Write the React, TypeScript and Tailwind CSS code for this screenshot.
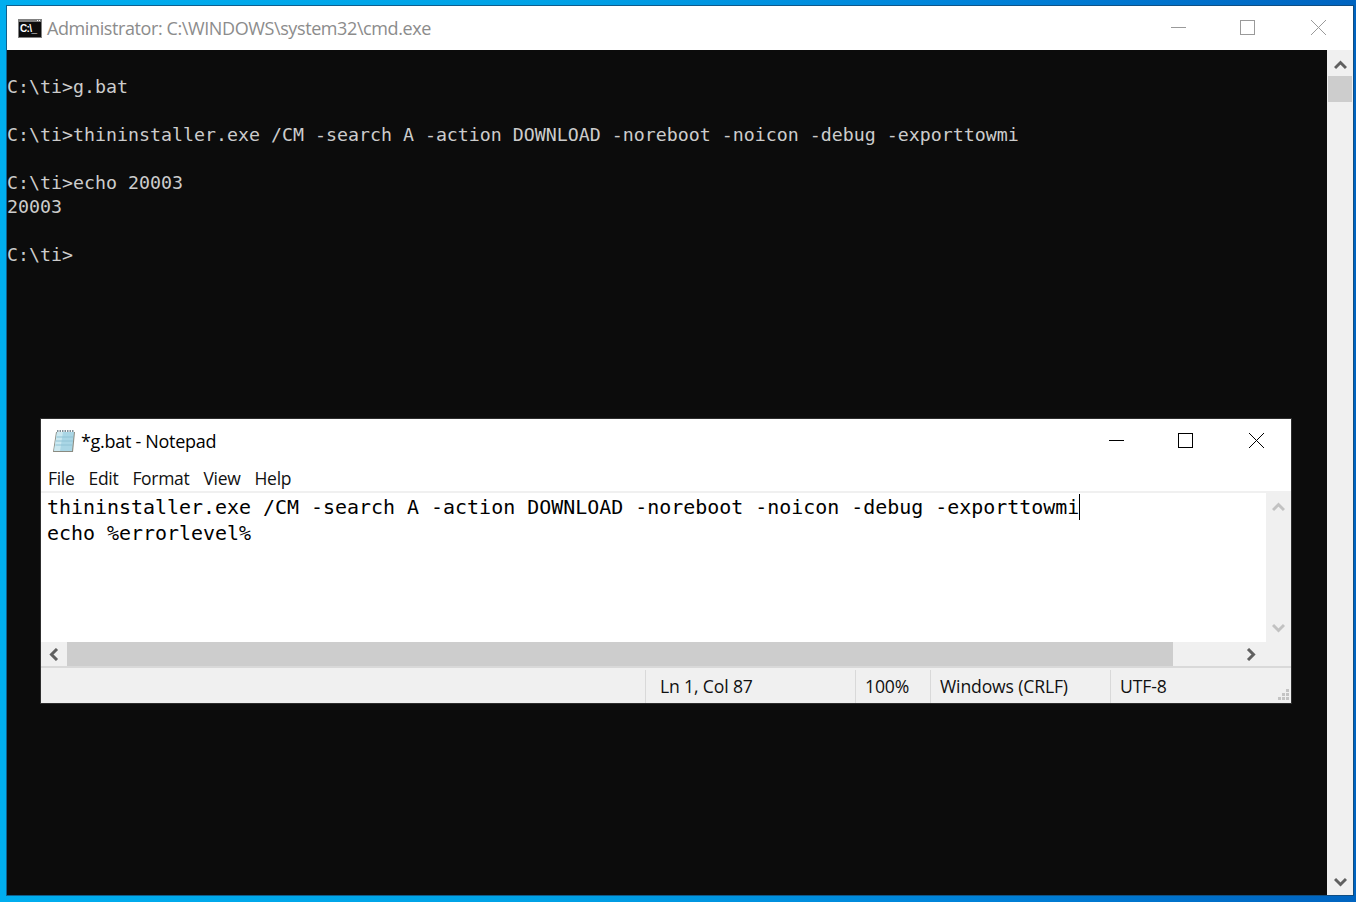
const mono = "font-['DejaVu_Sans_Mono','Liberation_Mono',monospace]";
const ui = "font-['Open_Sans','Noto_Sans',sans-serif]";

function Chevron({ dir, color, className }: { dir: "up" | "down" | "left" | "right"; color: string; className?: string }) {
  const d = {
    up: "M1 8 L6.5 2.5 L12 8",
    down: "M1 2 L6.5 7.5 L12 2",
    left: "M8 1 L2.5 6.5 L8 12",
    right: "M2 1 L7.5 6.5 L2 12",
  }[dir];
  const vertical = dir === "up" || dir === "down";
  return (
    <svg width={vertical ? 13 : 10} height={vertical ? 10 : 13} viewBox={vertical ? "0 0 13 10" : "0 0 10 13"} className={className}>
      <path d={d} fill="none" stroke={color} strokeWidth="3" />
    </svg>
  );
}

function WinButtons({ color }: { color: string }) {
  return (
    <div className="mb-px flex items-center">
      <svg width="15" height="15" viewBox="0 0 15 15"><path d="M0 7.5H15" stroke={color} strokeWidth="1" /></svg>
      <svg width="15" height="15" viewBox="0 0 15 15" className="ml-[54px]"><rect x="0.5" y="0.5" width="14" height="14" fill="none" stroke={color} strokeWidth="1" /></svg>
      <svg width="15" height="15" viewBox="0 0 15 15" className="ml-[56px]"><path d="M0 0L15 15M15 0L0 15" stroke={color} strokeWidth="1" /></svg>
    </div>
  );
}

function NotepadIcon() {
  return (
    <svg width="24" height="25" viewBox="0 0 24 25">
      <path d="M4 3 L23 3 L21 23 L1 23 Z" fill="#8a8a80" />
      <path d="M5 3 L22 3 L20 22 L2 22 Z" fill="#a9d6e5" />
      <path d="M5 3 L11 3 L8 22 L2 22 Z" fill="#cbe8f0" />
      <path d="M5 2 H22" stroke="#7f8f98" strokeWidth="2" strokeDasharray="1.5 1" />
      <path d="M4.5 8H21M4 12H21M3.5 16H20" stroke="#8fc2d4" strokeWidth="1" />
    </svg>
  );
}

export default function App() {
  return (
    <div className="relative h-[902px] w-[1356px] overflow-hidden bg-[linear-gradient(90deg,#00aeef_0%,#00a2e6_40%,#0084da_70%,#0064c0_100%)]">
      {/* Command prompt window */}
      <div className="absolute left-[7px] top-[6px] flex h-[889px] w-[1346px] flex-col shadow-[0_0_0_1px_rgba(20,70,110,0.75)]">
        <div className={`flex h-[44px] shrink-0 items-center justify-between bg-white pl-[11px] pr-[27px] ${ui}`}>
          <div className="flex items-center gap-[5px]">
            <div className="flex h-[19px] w-[24px] flex-col bg-[#808080] px-px pb-px">
              <div className="flex h-[3px] shrink-0 items-center justify-end gap-px pr-px">
                <span className="h-px w-px bg-white" />
                <span className="h-px w-px bg-white" />
              </div>
              <div className="flex flex-1 items-center overflow-hidden bg-[#0c0c0c] pl-px">
                <span className="font-['Liberation_Sans',sans-serif] text-[10px] font-bold leading-[14px] tracking-[-0.6px] text-white">C:\_</span>
              </div>
            </div>
            <span className="text-[18px] leading-[24px] tracking-[-0.4px] text-[#8c8c8c]">Administrator: C:\WINDOWS\system32\cmd.exe</span>
          </div>
          <WinButtons color="#9a9a9a" />
        </div>
        <div className="flex min-h-0 flex-1">
          <pre className={`min-w-0 flex-1 bg-[#0c0c0c] pt-[25px] text-[18.27px] leading-[24px] text-[#cccccc] ${mono}`}>{`C:\\ti>g.bat

C:\\ti>thininstaller.exe /CM -search A -action DOWNLOAD -noreboot -noicon -debug -exporttowmi

C:\\ti>echo 20003
20003

C:\\ti>`}</pre>
          <div className="flex w-[26px] shrink-0 flex-col bg-[#f0f0f0]">
            <div className="flex h-[26px] shrink-0 items-center justify-center pt-[3px]"><Chevron dir="up" color="#606060" /></div>
            <div className="mx-px h-[26px] shrink-0 bg-[#cdcdcd]" />
            <div className="flex-1" />
            <div className="flex h-[26px] shrink-0 items-center justify-center"><Chevron dir="down" color="#606060" /></div>
          </div>
        </div>
      </div>

      {/* Notepad window */}
      <div className="absolute left-[41px] top-[419px] flex h-[284px] w-[1250px] flex-col bg-white shadow-[0_0_0_1px_#2e2e2e]">
        <div className={`flex h-[44px] shrink-0 items-center justify-between pl-[11px] pr-[27px] ${ui}`}>
          <div className="flex items-center gap-[5px]">
            <NotepadIcon />
            <span className="text-[18px] leading-[24px] tracking-[-0.3px] text-black">*g.bat - Notepad</span>
          </div>
          <WinButtons color="#000000" />
        </div>
        <div className={`flex h-[28px] shrink-0 items-center gap-[14px] pl-[7px] pt-[2px] text-[17.5px] leading-[24px] tracking-[-0.3px] text-[#111] ${ui}`}>
          <span>File</span>
          <span>Edit</span>
          <span>Format</span>
          <span>View</span>
          <span>Help</span>
        </div>
        <div className="h-[2px] shrink-0 bg-[#f0f0f0]" />
        <div className="flex h-[149px] shrink-0">
          <div className={`min-w-0 flex-1 whitespace-pre pl-[6px] pt-px text-[19.94px] leading-[26px] text-black ${mono}`}>
            <div className="flex">
              <span>thininstaller.exe /CM -search A -action DOWNLOAD -noreboot -noicon -debug -exporttowmi</span>
              <span className="h-[26px] w-px bg-black" />
            </div>
            <div>echo %errorlevel%</div>
          </div>
          <div className="flex w-[25px] shrink-0 flex-col items-center justify-between bg-[#f0f0f0] py-[9px]">
            <Chevron dir="up" color="#c2c2c2" />
            <Chevron dir="down" color="#c2c2c2" />
          </div>
        </div>
        <div className="flex h-[24px] shrink-0 bg-[#f0f0f0]">
          <div className="flex w-[26px] shrink-0 items-center justify-center"><Chevron dir="left" color="#606060" /></div>
          <div className="w-[1106px] shrink-0 bg-[#cdcdcd]" />
          <div className="flex flex-1 items-center justify-end pr-[35px]"><Chevron dir="right" color="#606060" /></div>
        </div>
        <div className={`relative flex min-h-0 flex-1 border-t-2 border-[#d9d9d9] bg-[#f0f0f0] pt-[2px] text-[17.6px] tracking-[-0.15px] text-[#111] ${ui}`}>
          <div className="w-[604px] shrink-0" />
          <div className="flex w-[210px] shrink-0 items-center border-l border-[#d9d9d9] pl-[14px]">Ln 1, Col 87</div>
          <div className="flex w-[75px] shrink-0 items-center border-l border-[#d9d9d9] pl-[9px]">100%</div>
          <div className="flex w-[180px] shrink-0 items-center border-l border-[#d9d9d9] pl-[9px]">Windows (CRLF)</div>
          <div className="flex flex-1 items-center border-l border-[#d9d9d9] pl-[9px]">UTF-8</div>
          <svg width="12" height="13" viewBox="0 0 12 13" className="absolute bottom-[1px] right-px">
            <path d="M8 0h3v3H8zM4 4h3v3H4zM8 4h3v3H8zM0 8h3v3H0zM4 8h3v3H4zM8 8h3v3H8z" fill="#c4c4c4" />
          </svg>
        </div>
      </div>
    </div>
  );
}
